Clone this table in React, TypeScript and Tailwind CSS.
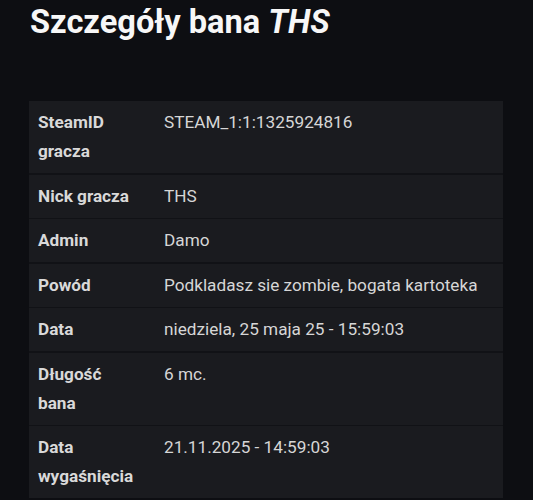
import React from "react";

const rows: [string, string][] = [
  ["SteamID gracza", "STEAM_1:1:1325924816"],
  ["Nick gracza", "THS"],
  ["Admin", "Damo"],
  ["Powód", "Podkladasz sie zombie, bogata kartoteka"],
  ["Data", "niedziela, 25 maja 25 - 15:59:03"],
  ["Długość bana", "6 mc."],
  ["Data wygaśnięcia", "21.11.2025 - 14:59:03"],
];

export default function App() {
  return (
    <div
      className="min-h-[500px] w-[533px] bg-[#0d0e12] pl-[29px] pr-[30px] pt-[3px]"
      style={{ fontFamily: "Roboto, 'Liberation Sans', sans-serif" }}
    >
      <h1 className="pl-[1px] text-[32.6px] font-bold leading-[39px] text-[#f7f7f7]">
        Szczegóły bana <i>THS</i>
      </h1>
      <div className="mt-[59px] flex flex-col gap-[1.5px] bg-[#111216]">
        {rows.map(([k, v]) => (
          <div key={k} className="flex bg-[#1a1b1f] py-[7px] text-[17.2px] leading-[29px]">
            <div className="w-[126px] shrink-0 pl-[9px] pr-[18px] font-bold text-[#d9d9d9]">{k}</div>
            <div className="pl-[9px] text-[#d6d6d6]">{v}</div>
          </div>
        ))}
      </div>
    </div>
  );
}
